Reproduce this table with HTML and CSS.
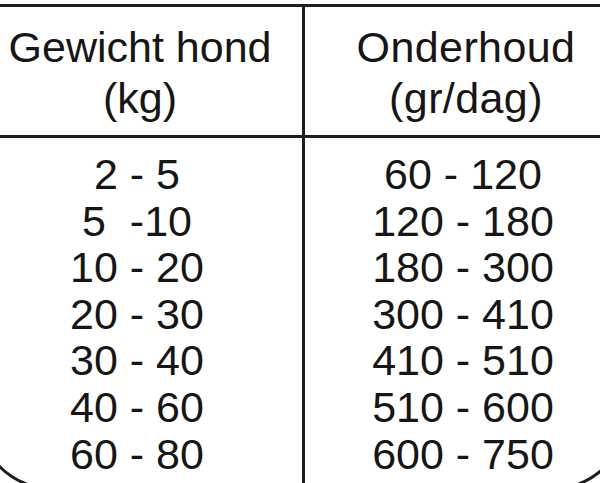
FILE: index.html
```html
<!DOCTYPE html>
<html lang="nl">
<head>
<meta charset="utf-8">
<title>Voedingstabel</title>
<link rel="stylesheet" href="styles.css">
</head>
<body>
<div class="table">
  <div class="cell head left">Gewicht hond<br>(kg)</div>
  <div class="cell head right">Onderhoud<br>(gr/dag)</div>
  <div class="cell body left">
    <div class="line">2 - 5</div>
    <div class="line">5  -10</div>
    <div class="line">10 - 20</div>
    <div class="line">20 - 30</div>
    <div class="line">30 - 40</div>
    <div class="line">40 - 60</div>
    <div class="line">60 - 80</div>
  </div>
  <div class="cell body right">
    <div class="line">60 - 120</div>
    <div class="line">120 - 180</div>
    <div class="line">180 - 300</div>
    <div class="line">300 - 410</div>
    <div class="line">410 - 510</div>
    <div class="line">510 - 600</div>
    <div class="line">600 - 750</div>
  </div>
</div>
</body>
</html>
```
FILE: styles.css
```css
html, body {
  margin: 0;
  padding: 0;
  background: #ffffff;
  overflow: hidden;
  width: 600px;
  height: 483px;
}
.table {
  margin: 4px 0 0 -25px;
  width: 655px;
  height: 487px;
  box-sizing: border-box;
  border: 3px solid #1e1e1e;
  border-radius: 0 0 80px 80px;
  display: grid;
  grid-template-columns: 327px 1fr;
  grid-template-rows: 131px 1fr;
  font-family: "Liberation Sans", Arial, sans-serif;
  font-size: 43px;
  color: #161616;
}
.cell {
  text-align: center;
}
.line {
  white-space: pre;
}
.left {
  border-right: 3px solid #1e1e1e;
}
.head {
  line-height: 51px;
  padding-top: 15px;
  border-bottom: 3px solid #1e1e1e;
}
.head.right {
  letter-spacing: 0.4px;
}
.body {
  padding-top: 13px;
  line-height: 46.6px;
}
.body.left {
  padding-right: 6px;
}
.body.right {
  padding-right: 6px;
}
```
